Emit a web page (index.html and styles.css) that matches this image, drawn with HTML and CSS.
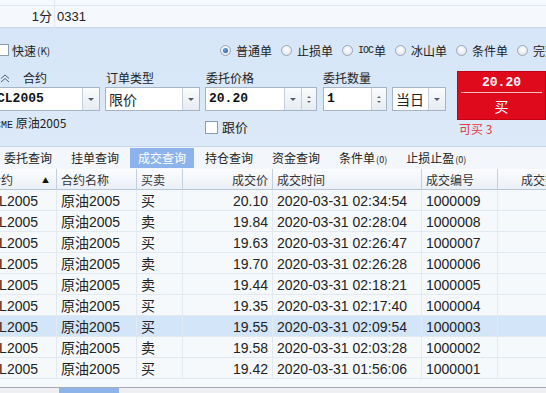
FILE: index.html
```html
<!DOCTYPE html>
<html lang="zh-CN">
<head>
    <meta charset="UTF-8">
    <meta name="viewport" content="width=device-width, initial-scale=1.0">
    <title>成交查询</title>
    <link rel="stylesheet" href="styles.css">
</head>
<body>

<!-- Quote rows above the order panel -->
<div class="quote">
    <div class="quote-row thin"><span class="q-key"></span><span class="q-val"></span></div>
    <div class="quote-row"><span class="q-key">1分</span><span class="q-val">0331</span></div>
</div>

<!-- Order entry panel -->
<div class="panel">
    <div class="options">
        <label class="quick"><span class="check"></span>快速<small>(K)</small></label>
        <div class="radios">
            <label class="radio-item"><span class="radio on"></span>普通单</label>
            <label class="radio-item"><span class="radio"></span>止损单</label>
            <label class="radio-item"><span class="radio"></span><span class="ioc">IOC</span>单</label>
            <label class="radio-item"><span class="radio"></span>冰山单</label>
            <label class="radio-item"><span class="radio"></span>条件单</label>
            <label class="radio-item"><span class="radio"></span>完整单</label>
        </div>
    </div>

    <div class="fields">
        <div class="field f-contract">
            <div class="field-label">
                <svg class="collapse" width="10" height="9" viewBox="0 0 10 9">
                    <path d="M1 4.5 L5 1 L9 4.5 M1 8 L5 4.5 L9 8" fill="none" stroke="#5a6270" stroke-width="1"/>
                </svg>
                合约
            </div>
            <div class="input">
                <span class="value mono">CL2005</span>
                <span class="drop"><i class="down"></i></span>
            </div>
            <div class="sub"><span class="mono-sm">CME</span> 原油2005</div>
        </div>
        <div class="field f-type">
            <div class="field-label">订单类型</div>
            <div class="input">
                <span class="value cjk">限价</span>
                <span class="drop"><i class="down"></i></span>
            </div>
        </div>
        <div class="field f-price">
            <div class="field-label">委托价格</div>
            <div class="input">
                <span class="value mono">20.20</span>
                <span class="drop"><i class="down"></i></span>
                <span class="spin"><i class="up-sm"></i><i class="down-sm"></i></span>
            </div>
            <label class="sub follow"><span class="check"></span>跟价</label>
        </div>
        <div class="field f-qty">
            <div class="field-label">委托数量</div>
            <div class="input">
                <span class="value mono">1</span>
                <span class="spin"><i class="up-sm"></i><i class="down-sm"></i></span>
            </div>
        </div>
        <div class="field f-tif">
            <div class="field-label"></div>
            <div class="input">
                <span class="value cjk">当日</span>
                <span class="drop"><i class="down"></i></span>
            </div>
        </div>
        <div class="buy-wrap">
            <div class="buy-btn">
                <div class="buy-price">20.20</div>
                <div class="buy-line"></div>
                <div class="buy-side">买</div>
            </div>
            <div class="can-buy">可买 3</div>
        </div>
    </div>
</div>

<!-- Query tabs -->
<div class="tabs">
    <span class="tab">委托查询</span>
    <span class="tab">挂单查询</span>
    <span class="tab active">成交查询</span>
    <span class="tab">持仓查询</span>
    <span class="tab">资金查询</span>
    <span class="tab">条件单<small>(0)</small></span>
    <span class="tab">止损止盈<small>(0)</small></span>
</div>

<!-- Trades table -->
<table class="trades">
    <colgroup>
        <col style="width:72px"><col style="width:80px"><col style="width:46px"><col style="width:90px">
        <col style="width:149px"><col style="width:76px"><col style="width:76px">
    </colgroup>
    <thead>
        <tr>
            <th>合约<span class="sort">▲</span></th>
            <th>合约名称</th>
            <th>买卖</th>
            <th class="num">成交价</th>
            <th>成交时间</th>
            <th>成交编号</th>
            <th class="num">成交数量</th>
        </tr>
    </thead>
    <tbody id="trade-rows"></tbody>
</table>
<div class="table-foot"></div>
<div class="bottom-bar"><span class="bottom-tab"></span></div>

<script>
    // Trade records
    const trades = [
        { side: "买", price: "20.10", time: "2020-03-31 02:34:54", id: "1000009" },
        { side: "卖", price: "19.84", time: "2020-03-31 02:28:04", id: "1000008" },
        { side: "买", price: "19.63", time: "2020-03-31 02:26:47", id: "1000007" },
        { side: "卖", price: "19.70", time: "2020-03-31 02:26:28", id: "1000006" },
        { side: "卖", price: "19.44", time: "2020-03-31 02:18:21", id: "1000005" },
        { side: "买", price: "19.35", time: "2020-03-31 02:17:40", id: "1000004" },
        { side: "买", price: "19.55", time: "2020-03-31 02:09:54", id: "1000003", selected: true },
        { side: "卖", price: "19.58", time: "2020-03-31 02:03:28", id: "1000002" },
        { side: "买", price: "19.42", time: "2020-03-31 01:56:06", id: "1000001" },
    ];

    const body = document.getElementById('trade-rows');
    trades.forEach(t => {
        const row = document.createElement('tr');
        if (t.selected) row.classList.add('selected');
        row.innerHTML = `
            <td>CL2005</td>
            <td>原油2005</td>
            <td>${t.side}</td>
            <td class="num">${t.price}</td>
            <td>${t.time}</td>
            <td>${t.id}</td>
            <td class="num">1</td>
        `;
        body.appendChild(row);
    });
</script>

</body>
</html>
```

FILE: styles.css
```css
body {
    margin: 0;
    width: 546px;
    height: 393px;
    overflow: hidden;
    background-color: #eef0f3;
    color: #222;
    font-family: "Liberation Sans", "Noto Sans CJK SC", sans-serif;
    font-size: 12px;
}
.quote {
    background-color: #f5f8fc;
}
.quote-row {
    display: grid;
    grid-template-columns: 55px 1fr;
    height: 21px;
    line-height: 22px;
    border-bottom: 1px solid #c9d6e4;
    font-size: 13px;
}
.quote-row.thin {
    height: 5px;
    border-bottom-color: #e0e7ef;
}
.q-key {
    text-align: right;
    padding-right: 2px;
    border-right: 1px solid #e0e7ef;
}
.q-val {
    padding-left: 2px;
}

/* order panel */
.panel {
    height: 118px;
    box-sizing: border-box;
    padding-top: 12px;
    background: linear-gradient(#d6e6f8, #dce9f8);
}
.options {
    display: flex;
    height: 20px;
    align-items: center;
    margin-left: -3px;
    white-space: nowrap;
}
.quick {
    display: flex;
    flex-shrink: 0;
    align-items: center;
    width: 223px;
    font-family: "Noto Sans CJK SC", sans-serif;
}
.quick small {
    font-size: 10px;
    margin-left: 1px;
}
.check {
    display: inline-block;
    width: 10px;
    height: 10px;
    background: #fff;
    border: 1px solid #8c9cb0;
    margin-right: 3px;
}
.radios {
    display: flex;
    flex-shrink: 0;
    gap: 9px;
}
.radio-item {
    display: flex;
    flex-shrink: 0;
    align-items: center;
    font-family: "Noto Sans CJK SC", sans-serif;
}
.radio {
    width: 9px;
    height: 9px;
    border-radius: 50%;
    border: 1px solid #9aa7b6;
    background: radial-gradient(circle at 50% 40%, #ffffff, #d9dfe6);
    margin-right: 5px;
    position: relative;
}
.radio.on::after {
    content: "";
    position: absolute;
    left: 2px;
    top: 2px;
    width: 5px;
    height: 5px;
    border-radius: 50%;
    background: radial-gradient(circle at 40% 35%, #6f9fe0, #1f4f9e);
}
.ioc {
    font-family: "Liberation Mono", monospace;
    font-size: 10px;
    letter-spacing: -1px;
    margin-right: 1px;
}

.fields {
    display: flex;
    align-items: flex-start;
    margin-top: 10px;
    margin-left: -8px;
}
.field {
    display: flex;
    flex-direction: column;
    flex-shrink: 0;
    font-family: "Noto Sans CJK SC", sans-serif;
}
.field-label {
    height: 16px;
    line-height: 16px;
    display: flex;
    align-items: center;
}
.f-contract { width: 108px; }
.f-contract .field-label { padding-left: 8px; }
.collapse { margin-right: 13px; }
.f-type { width: 95px; margin-left: 5px; }
.f-type .field-label { padding-left: 1px; }
.f-price { width: 112px; margin-left: 5px; }
.f-price .field-label { padding-left: 1px; }
.f-qty { width: 64px; margin-left: 6px; }
.f-tif { width: 54px; margin-left: 5px; }

.input {
    margin-top: 1px;
    height: 24px;
    box-sizing: border-box;
    display: flex;
    background: #fff;
    border: 1px solid #a7b4c4;
}
.value {
    flex: 1;
    line-height: 22px;
    padding-left: 3px;
    overflow: hidden;
}
.f-contract .value { padding-left: 4px; }
.mono {
    font-family: "Liberation Mono", monospace;
    font-weight: bold;
    font-size: 13px;
    color: #111;
}
.cjk {
    font-size: 14px;
}
.drop, .spin {
    display: flex;
    flex-direction: column;
    align-items: center;
    justify-content: center;
    border-left: 1px solid #c3cfdc;
    background: linear-gradient(#fafcfe, #e6ecf3);
}
.drop { width: 16px; }
.spin { width: 14px; gap: 3px; }
.down {
    width: 0;
    height: 0;
    border-left: 3px solid transparent;
    border-right: 3px solid transparent;
    border-top: 3px solid #555c66;
}
.up-sm, .down-sm {
    width: 0;
    height: 0;
    border-left: 2px solid transparent;
    border-right: 2px solid transparent;
}
.up-sm { border-bottom: 2px solid #666; }
.down-sm { border-top: 2px solid #666; }

.sub {
    margin-top: 4px;
    height: 16px;
    line-height: 16px;
    white-space: nowrap;
}
.f-contract .sub { margin-left: 3px; }
.mono-sm {
    font-family: "Liberation Mono", monospace;
    font-size: 10px;
}
.follow {
    display: flex;
    align-items: center;
    margin-top: 8px;
    font-size: 13px;
}
.follow .check {
    width: 11px;
    height: 11px;
    margin-right: 4px;
}

.buy-wrap {
    margin-left: 11px;
    width: 89px;
    flex-shrink: 0;
}
.buy-btn {
    margin-top: 1px;
    height: 49px;
    box-sizing: border-box;
    background-color: #df0a1c;
    border: 1px solid #c20012;
    color: #fff;
    text-align: center;
}
.buy-price {
    height: 20px;
    line-height: 21px;
    font-family: "Liberation Mono", monospace;
    font-weight: bold;
    font-size: 13px;
}
.buy-line {
    height: 1px;
    margin: 0 3px;
    background: #f4c0c4;
}
.buy-side {
    line-height: 26px;
    font-family: "Noto Sans CJK SC", sans-serif;
    font-size: 14px;
}
.can-buy {
    margin-top: 0;
    padding-left: 2px;
    color: #e23b45;
    font-family: "Noto Sans CJK SC", sans-serif;
}

/* tabs */
.tabs {
    display: flex;
    gap: 3px;
    height: 22px;
    border-top: 1px solid #c5d5e7;
    background-color: #f3f7fb;
    margin-left: -4px;
    font-family: "Noto Sans CJK SC", sans-serif;
    white-space: nowrap;
}
.tab {
    flex-shrink: 0;
    margin-top: 1px;
    height: 20px;
    line-height: 20px;
    padding: 0 8px;
}
.tab small {
    font-size: 9px;
    margin-left: 1px;
}
.tab.active {
    background-color: #8db3ec;
    color: #fff;
}

/* table */
.trades {
    margin-left: -15px;
    table-layout: fixed;
    border-collapse: separate;
    border-spacing: 0;
    width: 589px;
    background-color: #f6f9fc;
}
.trades th, .trades td {
    height: 18px;
    line-height: 18px;
    padding: 2px 4px 0;
    text-align: left;
    white-space: nowrap;
    overflow: hidden;
}
.trades th {
    font-weight: normal;
    font-family: "Noto Sans CJK SC", sans-serif;
    font-size: 12px;
    color: #333;
    background: linear-gradient(#fbfcfe, #ebf0f7);
    border-right: 1px solid #c3cfdc;
    border-bottom: 1px solid #b9c6d5;
    position: relative;
}
.sort {
    position: absolute;
    right: 7px;
    top: 2px;
    font-size: 7px;
    color: #111;
}
.trades td {
    font-size: 14px;
    color: #222;
    border-right: 1px solid #e2e9f1;
    border-bottom: 1px solid #e2e9f1;
}
.trades .num {
    text-align: right;
}
.trades tr.selected td {
    background-color: #d3e6f9;
}
.table-foot {
    height: 8px;
    background-color: #f6f9fc;
    border-bottom: 1px solid #a3abb7;
}
.bottom-bar {
    height: 6px;
    background-color: #eef0f3;
}
.bottom-tab {
    display: block;
    margin-left: 59px;
    width: 60px;
    height: 6px;
    background-color: #8fb4ea;
}
```
